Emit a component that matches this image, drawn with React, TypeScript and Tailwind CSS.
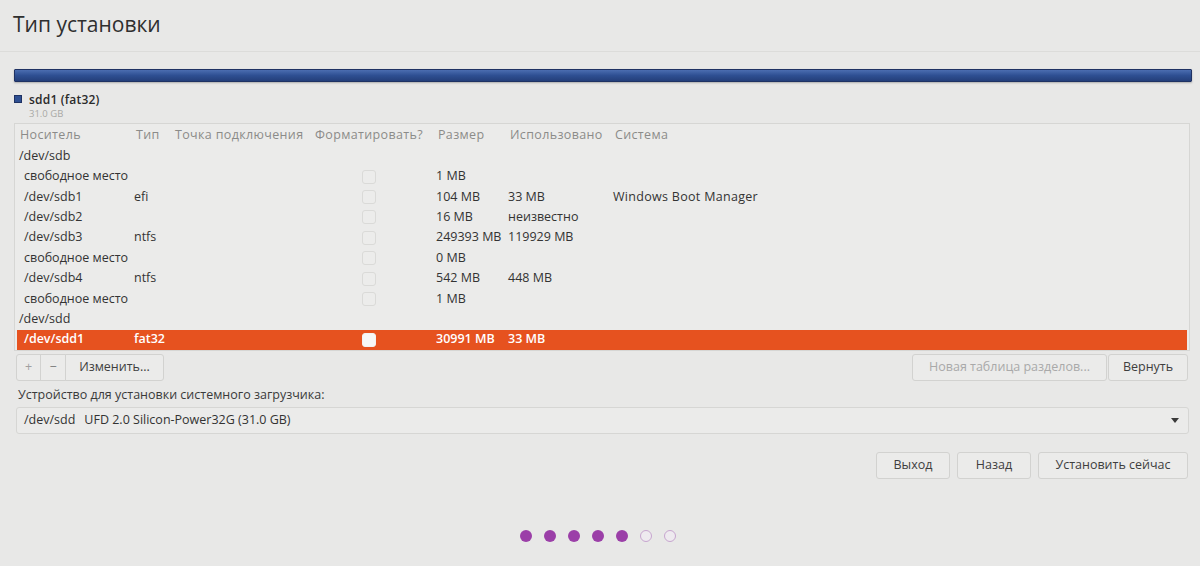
import React from 'react';

type Row = {
  name: string;
  type?: string;
  format?: boolean;
  size?: string;
  used?: string;
  system?: string;
  child?: boolean;
  selected?: boolean;
};

const rows: Row[] = [
  { name: '/dev/sdb' },
  { name: 'свободное место', format: true, size: '1 MB', child: true },
  { name: '/dev/sdb1', type: 'efi', format: true, size: '104 MB', used: '33 MB', system: 'Windows Boot Manager', child: true },
  { name: '/dev/sdb2', format: true, size: '16 MB', used: 'неизвестно', child: true },
  { name: '/dev/sdb3', type: 'ntfs', format: true, size: '249393 MB', used: '119929 MB', child: true },
  { name: 'свободное место', format: true, size: '0 MB', child: true },
  { name: '/dev/sdb4', type: 'ntfs', format: true, size: '542 MB', used: '448 MB', child: true },
  { name: 'свободное место', format: true, size: '1 MB', child: true },
  { name: '/dev/sdd' },
  { name: '/dev/sdd1', type: 'fat32', format: true, size: '30991 MB', used: '33 MB', child: true, selected: true },
];

const cols = 'grid grid-cols-[116px_39px_140px_123px_72px_105px_1fr] items-center';

function Btn({ children, className = '', disabled = false }: { children: React.ReactNode; className?: string; disabled?: boolean }) {
  return (
    <button
      className={`h-[27px] rounded-[3px] border border-[#d2d2d0] bg-[#ebebea] text-[12.5px] ${disabled ? 'text-[#a9a9a9]' : 'text-[#3e3e3e]'} ${className}`}
    >
      {children}
    </button>
  );
}

export default function App() {
  return (
    <div className="w-[1200px] h-[566px] overflow-hidden bg-[#e8e8e7] text-[#3a3a3a] font-['Open_Sans','Noto_Sans',sans-serif]">
      {/* header */}
      <div className="h-[52px] border-b border-[#dcdcda] pl-[13px] pt-[10px]">
        <h1 className="text-[21px] leading-[28px] text-[#2f2f2f]">Тип установки</h1>
      </div>

      <div className="px-[14px] pt-[17px]">
        {/* partition bar */}
        <div className="h-[13px] w-[1178px] rounded-[1px] border border-[#1f3263] bg-gradient-to-b from-[#4b6db0] via-[#2e4f92] to-[#243f7a] shadow-[0_1px_2px_rgba(0,0,0,0.25)]" />

        {/* legend */}
        <div className="mt-[11px] flex items-start gap-[7px]">
          <span className="mt-[2px] h-[8px] w-[8px] border border-[#1f3263] bg-[#2e4f92]" />
          <div className="flex flex-col">
            <span className="text-[12px] font-semibold leading-[14px] tracking-[0.2px] text-[#2b2b2b]">sdd1 (fat32)</span>
            <span className="text-[9.5px] leading-[13px] text-[#a8a8a6]">31.0 GB</span>
          </div>
        </div>

        {/* partition table */}
        <div className="mt-[3px] h-[228px] w-[1176px] border border-[#d6d6d4] bg-[#ebebea] px-[2px] pt-[1px] text-[12.5px]">
          <div className={`${cols} h-[21px] pl-[3px] tracking-[0.35px] text-[#8b8b89]`}>
            <span>Носитель</span>
            <span>Тип</span>
            <span>Точка подключения</span>
            <span>Форматировать?</span>
            <span>Размер</span>
            <span>Использовано</span>
            <span>Система</span>
          </div>
          {rows.map((r, i) => (
            <div
              key={i}
              className={`${cols} h-[20.4px] pl-[1px] ${r.selected ? 'bg-[#e6521f] font-semibold text-white' : 'text-[#333]'}`}
            >
              <span className={r.child ? 'pl-[6px]' : 'pl-[1px]'}>{r.name}</span>
              <span>{r.type}</span>
              <span />
              <span className="pl-[49px]">
                {r.format && (
                  <span
                    className={`block h-[14px] w-[14px] rounded-[3px] border ${r.selected ? 'border-[#f2f2f2] bg-[#f7f7f7]' : 'border-[#dadad8] bg-[#ececeb]'}`}
                  />
                )}
              </span>
              <span>{r.size}</span>
              <span>{r.used}</span>
              <span className="tracking-[0.3px]">{r.system}</span>
            </div>
          ))}
        </div>

        {/* table toolbar */}
        <div className="mt-[3px] flex w-[1176px] items-center justify-between pl-[2px] pr-[2px]">
          <div className="flex">
            <Btn className="w-[25px] rounded-r-none text-[#a0a0a0]">+</Btn>
            <Btn className="-ml-px w-[26px] rounded-none text-[#7a7a7a]">−</Btn>
            <Btn className="-ml-px w-[99px] rounded-l-none">Изменить...</Btn>
          </div>
          <div className="flex gap-[1px]">
            <Btn disabled className="w-[195px]">Новая таблица разделов...</Btn>
            <Btn className="w-[80px]">Вернуть</Btn>
          </div>
        </div>

        {/* boot loader device */}
        <div className="mt-[6px] pl-[4px] text-[12.5px] leading-[16px] text-[#3a3a3a]">
          Устройство для установки системного загрузчика:
        </div>
        <div className="mt-[4px] ml-[2px] flex h-[27px] w-[1173px] items-center justify-between rounded-[3px] border border-[#d6d6d4] bg-[#ebebea] pl-[7px] pr-[9px] text-[12.5px] text-[#333]">
          <span>
            /dev/sdd<span className="ml-[9px]">UFD 2.0 Silicon-Power32G (31.0 GB)</span>
          </span>
          <svg width="8" height="5" viewBox="0 0 8 5">
            <path d="M0 0h8L4 5z" fill="#3a3a3a" />
          </svg>
        </div>

        {/* navigation */}
        <div className="mt-[18px] flex w-[1174px] justify-end gap-[7px]">
          <Btn className="w-[74px]">Выход</Btn>
          <Btn className="w-[74px]">Назад</Btn>
          <Btn className="w-[150px]">Установить сейчас</Btn>
        </div>

        {/* step indicator */}
        <div className="mt-[51px] flex justify-center gap-[12px] pr-[4px]">
          {[0, 1, 2, 3, 4, 5, 6].map((i) => (
            <span
              key={i}
              className={`h-[12px] w-[12px] rounded-full ${i < 5 ? 'bg-[#9b3fa8]' : 'border border-[#c7a5cf] bg-[#eeeaef]'}`}
            />
          ))}
        </div>
      </div>
    </div>
  );
}
